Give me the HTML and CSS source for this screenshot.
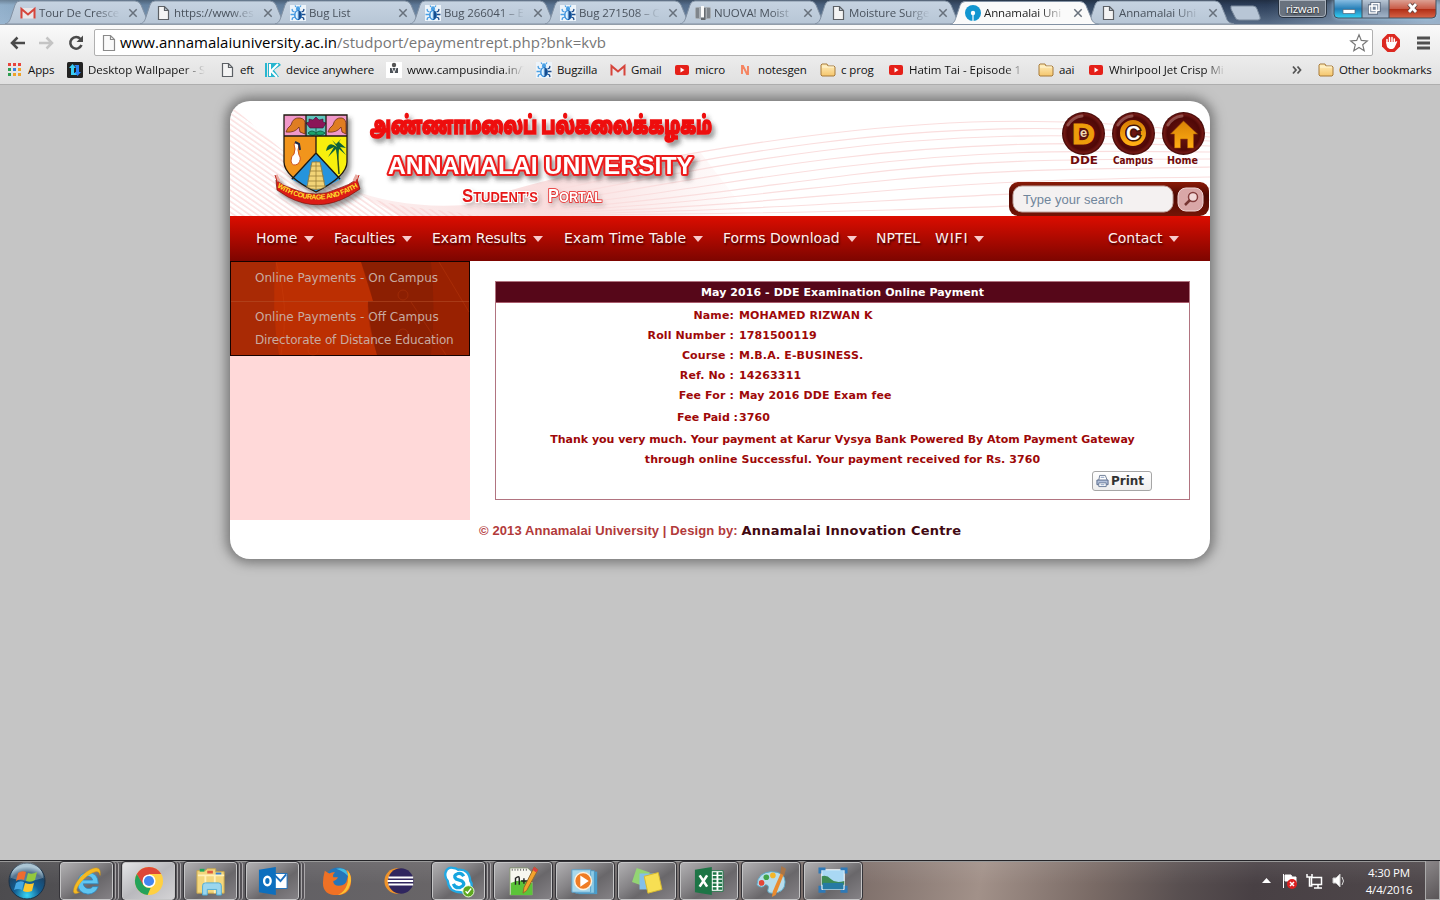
FILE: index.html
```html
<!DOCTYPE html>
<html lang="en">
<head>
<meta charset="utf-8">
<title>Annamalai University</title>
<link rel="stylesheet" href="styles.css">
</head>
<body>
<svg class="defs" width="0" height="0">
  <defs>
    <linearGradient id="tabg" x2="0" y2="1"><stop offset="0" stop-color="#c6d3e1"/><stop offset="1" stop-color="#b7c6d6"/></linearGradient>
    <linearGradient id="foldg" x2="0" y2="1"><stop offset="0" stop-color="#fff0c0"/><stop offset="1" stop-color="#f5c56b"/></linearGradient>
    <symbol id="tab" viewBox="0 0 149 24"><path d="M0 24C4 23 5 20 6 17L10 5Q11 1 15 1H130Q134 1 136 5L141 17C142 21 144 23 149 24Z"/></symbol>
    <symbol id="x" viewBox="0 0 10 10"><path d="M1.300 1.300 8.700 8.700M8.700 1.300 1.300 8.700" stroke="currentColor" stroke-width="1.500"/></symbol>
    <symbol id="gmail" viewBox="0 0 16 16"><path d="M1 3h14v10.500H1z" fill="#e8e6e8"/><path d="M1.500 13.500V4L8 9.500 14.500 4v9.500" fill="none" stroke="#d6453b" stroke-width="2"/></symbol>
    <symbol id="page" viewBox="0 0 16 16"><path d="M3.500 1.500h6l4 4v9h-10zM9.500 1.500v4h4" fill="#f4f4f4" stroke="#5c6065" stroke-width="1.200"/></symbol>
    <symbol id="bug" viewBox="0 0 16 16"><path fill="#edf4fa" d="M0 0h16v16H0z"/><path d="M6 2 5 .5M10 2l1-1.500M4.500 7 2.500 6 2 4M4.500 9.500H.5M5 12l-2.500 1-.5 2" stroke="#4ba0e4" fill="none" stroke-width="1.300"/><path d="M11.500 7l2-1 .5-2M11.500 9.500h4M11 12l2.500 1 .5 2" stroke="#1c4c8c" fill="none" stroke-width="1.300"/><path d="M5.500 5h5L8 3z" fill="#4ba0e4"/><circle cx="8" cy="3.200" r="2" fill="#4ba0e4"/><ellipse cx="8" cy="10" rx="3.200" ry="4.500" fill="#e3f3ff" stroke="#3b91dc" stroke-width="1.500"/><path d="M8 5.500c5 .5 4.500 8.500 0 9.500z" fill="#174d8f"/><path d="M8 6v8" stroke="#9ed2f8"/></symbol>
    <symbol id="yt" viewBox="0 0 16 16"><rect x="1" y="3" width="14" height="10" rx="2" fill="#e52019"/><path d="m6.500 5.500 4 2.500-4 2.500z" fill="#fff"/></symbol>
    <symbol id="folder" viewBox="0 0 16 16"><path d="M1 13V3l1-1h5l1 2h6l1 1v8l-1 1H2z" fill="url(#foldg)" stroke="#a77a3b"/><path d="M2 5h12" stroke="#fff6d5"/></symbol>
  </defs>
</svg>

<header class="chrome">
  <div class="strip">
    <div class="tab"><svg class="shape"><use href="#tab"/></svg><svg class="ico"><use href="#gmail"/></svg><span>Tour De Cresce</span><svg class="close"><use href="#x"/></svg></div>
    <div class="tab"><svg class="shape"><use href="#tab"/></svg><svg class="ico"><use href="#page"/></svg><span>https://www.es</span><svg class="close"><use href="#x"/></svg></div>
    <div class="tab"><svg class="shape"><use href="#tab"/></svg><svg class="ico"><use href="#bug"/></svg><span>Bug List</span><svg class="close"><use href="#x"/></svg></div>
    <div class="tab"><svg class="shape"><use href="#tab"/></svg><svg class="ico"><use href="#bug"/></svg><span>Bug 266041 – E</span><svg class="close"><use href="#x"/></svg></div>
    <div class="tab"><svg class="shape"><use href="#tab"/></svg><svg class="ico"><use href="#bug"/></svg><span>Bug 271508 – C</span><svg class="close"><use href="#x"/></svg></div>
    <div class="tab"><svg class="shape"><use href="#tab"/></svg><svg class="ico" viewBox="0 0 16 16"><rect y="2" width="16" height="12" rx="2" fill="#a7adb3"/><path fill="#7f858b" d="M1 3h3v10H1zM12 3h3v10h-3z"/><path fill="#fafafa" d="M6 1h3v11H6z"/><path fill="#666b70" d="M9 3h1.500v12H6v-2h3z"/></svg><span>NUOVA! Moist</span><svg class="close"><use href="#x"/></svg></div>
    <div class="tab"><svg class="shape"><use href="#tab"/></svg><svg class="ico"><use href="#page"/></svg><span>Moisture Surge</span><svg class="close"><use href="#x"/></svg></div>
    <div class="tab active"><svg class="shape"><use href="#tab"/></svg><svg class="ico" viewBox="0 0 16 16"><circle cx="8" cy="8" r="8" fill="#1296d0"/><circle cx="8" cy="8" r="2.200" fill="#fff"/><path d="M8 8v8" stroke="#fff" stroke-width="1.200"/></svg><span>Annamalai Uni</span><svg class="close"><use href="#x"/></svg></div>
    <div class="tab"><svg class="shape"><use href="#tab"/></svg><svg class="ico"><use href="#page"/></svg><span>Annamalai Uni</span><svg class="close"><use href="#x"/></svg></div>
    <svg class="newtab" viewBox="0 0 32 16"><path d="M1 1h22q3 0 4 3l3 8q1 3-2 3H9q-3 0-4-3L1 4Z" fill="#b8c6d6" stroke="#7c8b9d"/></svg>
    <div class="user">rizwan</div>
    <svg class="winbtns" viewBox="0 0 104 20">
      <defs><linearGradient id="wr" x2="0" y2="1"><stop offset="0" stop-color="#dca093"/><stop offset=".48" stop-color="#c95b47"/><stop offset=".5" stop-color="#b02c14"/><stop offset="1" stop-color="#d76548"/></linearGradient><linearGradient id="wb" x2="0" y2="1"><stop offset="0" stop-color="#88bde2"/><stop offset=".5" stop-color="#247eb7"/><stop offset="1" stop-color="#33d4f5"/></linearGradient><linearGradient id="wg" x2="0" y2="1"><stop offset="0" stop-color="#b8c6d5"/><stop offset=".5" stop-color="#8192a7"/><stop offset="1" stop-color="#a3b6cb"/></linearGradient></defs>
      <path d="M1 0h28v18H5q-4 0-4-4z" fill="url(#wb)"/><path d="M29 0h27v18H29z" fill="url(#wg)"/><path d="M56 0h47v14q0 4-4 4H56z" fill="url(#wr)"/><path d="M1 0v14q0 4 4 4h94q4 0 4-4V0M29 0v18M56 0v18" fill="none" stroke="#43505f"/>
      <path d="M10 9.500h12v4H10z" fill="#fff" stroke="#4d657b" stroke-width=".7"/><path d="M39 3.500h7v7h-7zM36.500 6h7v7h-7z" fill="#91a1b5" stroke="#43536a" stroke-width="3"/><path d="M39 3.500h7v7h-7zM36.500 6h7v7h-7z" fill="#71839a" stroke="#fff" stroke-width="1.600"/><path d="m76 4 7 8m0-8-7 8" stroke="#62423d" stroke-width="4.500"/><path d="m76 4 7 8m0-8-7 8" stroke="#fff" stroke-width="2.800"/>
    </svg>
  </div>
  <div class="toolbar">
    <svg class="navico" viewBox="0 0 86 20"><path d="M17 10H4M9.500 4.500 4 10l5.500 5.500" fill="none" stroke="#4a4a4a" stroke-width="2.500"/><path d="M31 10h13M38.500 4.500 44 10l-5.500 5.500" fill="none" stroke="#c4c4c4" stroke-width="2.500"/><path d="M72.500 6A5.800 5.800 0 1 0 73.500 12" fill="none" stroke="#4a4a4a" stroke-width="2.500"/><path d="M75 2.500V9h-6.500z" fill="#4a4a4a"/></svg>
    <div class="omni"><svg class="pageico" viewBox="0 0 14 18"><path d="M1.500 1.500h7l4 4v11h-11zM8.500 1.500v4h4" fill="#fafafa" stroke="#8a8a8a" stroke-width="1.200"/></svg><div class="url"><b>www.annamalaiuniversity.ac.in</b>/studport/epaymentrept.php?bnk=kvb</div><svg class="star" viewBox="0 0 20 20"><path d="m10 1.800 2.300 5.600 6 .5-4.600 3.900 1.500 5.900L10 14.500l-5.200 3.200 1.500-5.900-4.600-3.900 6-.5z" fill="#fff" stroke="#777" stroke-width="1.200"/></svg></div>
    <svg class="abp" viewBox="0 0 18 18"><path d="M5.500 0h7L18 5.500v7L12.500 18h-7L0 12.500v-7z" fill="#dc2820"/><path d="M5 9V5.500M7.500 9V3.500M10 9V3.500M12.300 9V5" stroke="#fff" stroke-width="1.500" stroke-linecap="round"/><path d="M4.300 8h8.700l2-1c.8.300-.4 2-2 5.500-1 2-2 2.500-4 2.500-3 0-4.700-2-4.700-7z" fill="#fff"/></svg>
    <svg class="menuico" viewBox="0 0 14 14"><path d="M0 2h13M0 7h13M0 12h13" stroke="#505050" stroke-width="3"/></svg>
  </div>
  <div class="marks">
    <div><svg class="ico" viewBox="0 0 16 16"><path d="M1 1h3v3H1zM6 1h3v3H6zM11 1h3v3h-3z" fill="#e8453c"/><path d="M1 6h3v3H1zM1 11h3v3H1z" fill="#2e9e50"/><path d="M6 6h3v3H6z" fill="#3a80e0"/><path d="M11 6h3v3h-3zM6 11h3v3H6zM11 11h3v3h-3z" fill="#efa32a"/></svg><span>Apps</span></div>
    <div><svg class="ico" viewBox="0 0 16 16"><rect width="16" height="16" rx="1.500" fill="#222"/><path d="M5.500 2 9 6H7v5h3v2H4V6H2z" fill="#38cdf5"/><path d="m10.500 14 3.500-4h-2V3H7l2 2v5H7.500z" fill="#2b83f4"/></svg><span class="fade w117">Desktop Wallpaper - S</span></div>
    <div><svg class="ico"><use href="#page"/></svg><span>eft</span></div>
    <div><svg class="ico" viewBox="0 0 16 16"><path fill="#27b6cf" d="M0 1h2v14H0zM3 1h11l2 2-7 5 5 7H3z"/><path d="M5 2v12M13 2 6 9l6 6" stroke="#fff" stroke-width="2" fill="none"/></svg><span>device anywhere</span></div>
    <div><svg class="ico" viewBox="0 0 16 16"><path fill="#fff" d="M0 0h16v16H0z"/><circle cx="8" cy="3" r="2.200" fill="#555"/><path d="M4 6h8v5H4z" fill="#4b5158"/><path d="m6 6 2 5 2-5M8 11v-2" stroke="#eee" fill="none"/></svg><span class="fade w117">www.campusindia.in/?</span></div>
    <div><svg class="ico"><use href="#bug"/></svg><span>Bugzilla</span></div>
    <div><svg class="ico"><use href="#gmail"/></svg><span>Gmail</span></div>
    <div><svg class="ico"><use href="#yt"/></svg><span>micro</span></div>
    <div><svg class="ico" viewBox="0 0 16 16"><path d="M5 12V4h1l4 8h1V4" fill="none" stroke="#f58461" stroke-width="1.900"/></svg><span>notesgen</span></div>
    <div><svg class="ico"><use href="#folder"/></svg><span>c prog</span></div>
    <div><svg class="ico"><use href="#yt"/></svg><span class="fade w117">Hatim Tai - Episode 1</span></div>
    <div><svg class="ico"><use href="#folder"/></svg><span>aai</span></div>
    <div><svg class="ico"><use href="#yt"/></svg><span class="fade w117">Whirlpool Jet Crisp Mi</span></div>
    <div><svg class="more" viewBox="0 0 12 10"><path d="m2 1.500 3 3.500L2 8.500M6.500 1.500 9.500 5 6.500 8.500" fill="none" stroke="#555" stroke-width="1.800"/></svg></div>
    <div><svg class="ico"><use href="#folder"/></svg><span>Other bookmarks</span></div>
  </div>
</header>

<main class="view">
  <section class="card">
    <svg class="banner" viewBox="0 0 980 115">
      <defs>
        <pattern id="hatch" width="40" height="4.500" patternUnits="userSpaceOnUse" patternTransform="rotate(35)"><path d="M0 1h40" stroke="#fbe1e1" stroke-width="1.400"/></pattern>
        <radialGradient id="orb" cx=".5" cy=".5" r=".5"><stop offset="0" stop-color="#6e1711"/><stop offset=".75" stop-color="#500807"/><stop offset=".9" stop-color="#701814"/><stop offset="1" stop-color="#3c0605"/></radialGradient>
        <linearGradient id="gold" x2="0" y2="1"><stop offset="0" stop-color="#d98206"/><stop offset="1" stop-color="#ffae13"/></linearGradient>
        <linearGradient id="wash"><stop offset="0" stop-color="#f7cfcf" stop-opacity=".3"/><stop offset=".5" stop-color="#f7cfcf" stop-opacity=".7"/><stop offset="1" stop-color="#f7cfcf" stop-opacity="0"/></linearGradient>
        <linearGradient id="sbar" x2="0" y2="1"><stop offset="0" stop-color="#8b1b08"/><stop offset=".4" stop-color="#4d0902"/><stop offset="1" stop-color="#751506"/></linearGradient>
        <filter id="sh" x="-20%" y="-40%" width="140%" height="200%"><feDropShadow dx="3" dy="4" stdDeviation="2" flood-color="#333" flood-opacity=".5"/></filter>
        <filter id="soft" x="-20%" y="-40%" width="140%" height="200%"><feDropShadow dx="2" dy="3" stdDeviation="2" flood-color="#333" flood-opacity=".25"/></filter>
      </defs>
      <path d="M0 4C45 40 85 93 180 106Q220 110 250 115H0Z" fill="url(#hatch)"/>
      <path d="M120 88Q170 108 235 104Q330 70 470 51L520 115H170Z" fill="url(#wash)"/>
      <g fill="none" stroke="#fadede" stroke-width="1.200">
        <path d="M250 101C350 74 440 53 570 36S820 13 980 32"/><path d="M260 103C370 80 450 60 580 43S830 22 980 36"/><path d="M270 105C390 85 460 67 590 50S830 31 980 40"/><path d="M280 107C410 90 470 74 600 58S830 40 980 45"/><path d="M290 108C430 95 480 82 610 66S830 49 980 51"/><path d="M300 110C440 99 500 89 620 74S830 58 980 58"/><path d="M310 111C450 103 510 95 630 82S830 68 980 66"/><path d="M320 112C460 107 520 101 640 91S830 78 980 76"/><path d="M330 113C470 110 530 107 650 100S830 90 980 87"/><path d="M340 114C480 113 550 112 660 109S830 102 980 99"/>
      </g>
      <g filter="url(#sh)">
        <path d="M54 14h63v47q0 14-31 30Q54 76 54 61Z" fill="#f1951e"/>
        <path d="M86 35h31v26q0 14-31 30z" fill="#f8ef10"/><path d="M86 52 61 78l25 13 25-13z" fill="#2694dc"/>
        <path d="M54 14h63v21H54z" fill="#f198c9"/><path d="M76 14h20v21H76z" fill="#60c5bd"/>
        <g stroke="#6d3115" stroke-width=".8" fill="#df7d24"><path d="M56 31q1-4 5-7 2-8 9-7 6 1 5 7v9l-5-2-1-5q-4 6-13 5z"/><path d="M98 31q1-4 5-7 2-8 9-7 4 1 4 7v9l-4-2-1-5q-4 6-13 5z"/></g>
        <path d="m86 16-3 3-4-1v3l-3 1 4 5h13l3-5-3-1v-3l-4 1z" fill="#8b1858" stroke="#3d1237" stroke-width=".6"/><path d="M78 32q4-4 8 0 4-4 9 0-4 4-9 1-4 3-8-1M86 27v7" stroke="#156748" fill="#1ca36c"/>
        <path d="M54 35h63M76 14v21M96 14v21M86 35v18M54 14v47q0 14 32 30Q117 75 117 61V14ZM86 52 62 78M86 52l24 26" fill="none" stroke="#211910" stroke-width="1.300"/>
        <path d="M82 61h8l5 25q-9 5-18 0z" fill="#f2d477" stroke="#87703a" stroke-width=".7"/><path d="M80 65h12M79 70h14M78 75h16M77 80h18M76 85h20M86 60v29" stroke="#9d8138" stroke-width=".8"/>
        <path d="M64 43q3-3 5 1-2 5 0 10 3 4-1 9-6 3-7-3 0-5 3-7 2-5 0-10z" fill="#fff" stroke="#d0541d"/><path d="m65 41 4 2 1 6" stroke="#1b294b" fill="none" stroke-width="2"/>
        <path d="M109 73 107 46" stroke="#365118" stroke-width="1.500"/><path d="M107 46q-9-7-11 4l8-4-6 10 8-8 2 11 1-11 7 6-6-8 6 1-7-6 2-3-5 5-4-4z" fill="#0a623a"/>
        <path d="M46 79q7 6 17 9 23 10 44 0 13-4 20-10l3 10-11 7q-31 17-61 1l-11-7z" fill="#db1d14" stroke="#77110a" stroke-width=".7"/><path d="m46 74 3 6M127 74l-3 6" stroke="#e9a9a0" stroke-width="3"/><path d="m45 74 2 6M129 74l-2 6" stroke="#c22b20" stroke-width="1"/>
      </g>
      <path id="motto" d="M47 86Q86 111 128 86" fill="none"/><text class="motto"><textPath href="#motto" textLength="86">WITH COURAGE AND FAITH</textPath></text>
      <g filter="url(#sh)"><text class="tamil" x="140" y="33" textLength="342" lengthAdjust="spacingAndGlyphs">அண்ணாமலைப் பல்கலைக்கழகம்</text></g>
      <g filter="url(#sh)"><text class="uni" x="158" y="73" textLength="305" lengthAdjust="spacingAndGlyphs">ANNAMALAI UNIVERSITY</text></g>
      <g filter="url(#soft)"><text class="student" x="232" y="101" textLength="76" lengthAdjust="spacingAndGlyphs">S<tspan class="sm">TUDENT’S</tspan></text><text class="portal" x="318" y="101" textLength="54" lengthAdjust="spacingAndGlyphs">P<tspan class="sm">ORTAL</tspan></text></g>
      <g class="orbs">
        <circle cx="853.500" cy="32.500" r="21.500" fill="url(#orb)"/><circle cx="903.500" cy="32.500" r="21.500" fill="url(#orb)"/><circle cx="953.500" cy="32.500" r="21.500" fill="url(#orb)"/>
        <g fill="none" stroke="#c99a93" stroke-width="3" opacity=".45" stroke-linecap="round"><path d="M838 24q5-8 14-9M888 24q5-8 14-9M938 24q5-8 14-9"/></g>
        <text class="bigd" x="842" y="43" textLength="23" lengthAdjust="spacingAndGlyphs">D</text><text class="ebig" x="850" y="36">e</text>
        <circle cx="903" cy="32" r="10.500" fill="none" stroke="url(#gold)" stroke-width="5"/><text class="bigc" x="896" y="39">C</text>
        <path d="m953.500 20-13 13h4v14h6v-9h7v9h6V33h4z" fill="url(#gold)" stroke="#a65309" stroke-width=".6"/>
        <g class="caption"><text x="840" y="63" textLength="28" lengthAdjust="spacingAndGlyphs">DDE</text><text x="883" y="63" textLength="40" lengthAdjust="spacingAndGlyphs">Campus</text><text x="937" y="63" textLength="31" lengthAdjust="spacingAndGlyphs">Home</text></g>
      </g>
      <rect x="779" y="81" width="200" height="34" rx="9" fill="url(#sbar)"/><rect x="783" y="85" width="160" height="26" rx="9" fill="#f4f1f1" stroke="#c1a59f"/>
      <text class="search" x="793" y="103" textLength="100">Type your search</text>
      <rect x="948" y="87" width="25" height="23" rx="8" fill="#d9a7a7" stroke="#eed4d4"/><circle cx="963" cy="96" r="4.500" fill="#f1d8d8" stroke="#853e3d" stroke-width="1.500"/><path d="m960 99-5 5" stroke="#753431" stroke-width="2.500"/>
    </svg>
    <nav class="menu"><a>Home<i></i></a><a>Faculties<i></i></a><a>Exam Results<i></i></a><a class="wide">Exam Time Table<i></i></a><a>Forms Download<i></i></a><a>NPTEL</a><a class="wifi">WIFI<i></i></a><a>Contact<i></i></a></nav>
    <div class="body">
      <aside class="side"><div class="links"><svg class="tex" viewBox="0 0 238 93" preserveAspectRatio="none"><path d="M45 0h85q8 18 12 39h-5q-2 20 9 54H48q-8-45-3-93z" fill="#c93400" opacity=".6"/><path d="M130 0h108v93H146q-9-34-9-54h5z" fill="#741500" opacity=".55"/><path d="M200 0q5 45 0 93h38V0z" fill="#b92800" opacity=".3"/><g fill="none" stroke="#d24a16" opacity=".25"><circle cx="172" cy="33" r="5"/><circle cx="172" cy="72" r="5"/><circle cx="82" cy="88" r="5"/><path d="m180 40 35 53M208 0l30 50M45 0q14 40 5 93"/></g><path d="M0 39.500h238" stroke="#b8542d" opacity=".5"/></svg><a>Online Payments - On Campus</a><a>Online Payments - Off Campus<br><span class="dde">Directorate of Distance Education</span></a></div></aside>
      <article class="main">
        <div class="panel">
          <h1>May 2016 - DDE Examination Online Payment</h1>
          <dl><dt>Name:</dt><dd>MOHAMED RIZWAN K</dd><dt>Roll Number :</dt><dd>1781500119</dd><dt>Course :</dt><dd>M.B.A. E-BUSINESS.</dd><dt>Ref. No :</dt><dd>14263311</dd><dt>Fee For :</dt><dd>May 2016 DDE Exam fee</dd><dt class="paid">Fee Paid :</dt><dd class="paid">3760</dd></dl>
          <p>Thank you very much. Your payment at Karur Vysya Bank Powered By Atom Payment Gateway<br><span>through online Successful. Your payment received for Rs. 3760</span></p>
          <button class="print"><svg viewBox="0 0 14 14"><path d="M3 6 4 1h6l2 5" fill="#fff" stroke="#6d7c94"/><path d="M1 6h12v5H1z" fill="#b4c2dc" stroke="#526486"/><path d="M3 9h8v4H3z" fill="#fff" stroke="#667896"/><path d="M5 3h4M5 11h4" stroke="#8298bd"/></svg>Print</button>
        </div>
        <footer>© 2013 Annamalai University | Design by: <b>Annamalai Innovation Centre</b></footer>
      </article>
    </div>
  </section>
</main>

<footer class="taskbar">
  <svg class="start" viewBox="0 0 40 40"><defs><radialGradient id="st" cx=".5" cy=".9" r=".8"><stop offset="0" stop-color="#38d7f5"/><stop offset=".45" stop-color="#125e93"/><stop offset=".8" stop-color="#1c4568"/><stop offset="1" stop-color="#8fb2c6"/></radialGradient></defs><circle cx="20" cy="20" r="18" fill="url(#st)" stroke="#1b3146"/><path d="M4 17a16 16 0 0 1 32 0q-16 6-32 0z" fill="#fff" opacity=".25"/><path d="M11 12q4-3 8-1l-2 8q-4-2-8 1z" fill="#ee6b2f"/><path d="M21 12q4 2 9-1l-2 8q-4 3-9 1z" fill="#93c83e"/><path d="M9 22q4-3 8-1l-2 8q-4-2-8 0z" fill="#45a8e4"/><path d="M18 22q5 2 9 0l-2 8q-5 2-9 0z" fill="#fdc72c"/></svg>
  <div class="apps">
    <div class="btn stack"><svg viewBox="0 0 32 32"><path d="M28 19H12q1 5 6 5 3 0 4-2h6q-3 8-11 8Q6 29 6 18 7 7 17 7q11 0 11 12zM12 15h10q-1-4-5-4t-5 4z" fill="#5fc5f1" stroke="#2b84bf" stroke-width=".8"/><path d="M8 28Q0 32 2 24C5 13 18 2 26 2q5 0 4 8-1-5-5-4C17 8 7 18 5 25q0 3 3 3z" fill="#f6ba23" stroke="#d99a10" stroke-width=".5"/></svg></div>
    <div class="btn on stack"><svg viewBox="0 0 32 32"><circle cx="16" cy="16" r="15" fill="#ffd042"/><path d="M16 16 9 20 3 8.500A15 15 0 0 1 29 8.500H16z" fill="#de4738"/><path d="M3 8.500 9.700 20q3 4 8 3.500L14.500 31A15 15 0 0 1 3 8.500z" fill="#24a25a"/><circle cx="16" cy="16" r="7" fill="#fff"/><circle cx="16" cy="16" r="5.400" fill="#4386ef"/></svg></div>
    <div class="btn stack"><svg viewBox="0 0 32 32"><path d="M1 5h9l2-2h9v3h9v23H1z" fill="#f4d77d" stroke="#c9a64c"/><path d="M4 3h5v3H4z" fill="#20a65c"/><path d="M12 5h6v3h-6z" fill="#de5a41"/><path d="M21 7h6v3h-6z" fill="#3680d3"/><path d="M2 10h28M10 10v19M20 11v18" stroke="#fff0b8" stroke-width="2"/><path d="M7 31V21q0-3 3-3h14q3 0 3 3v10h-5v-6H12v6z" fill="#9bd6ee" stroke="#4eabd8"/></svg></div>
    <div class="btn stack"><svg viewBox="0 0 32 32"><path d="M17 8h14v16H17z" fill="#fff" stroke="#1b70bd"/><path d="m18 10 6 6 6-7" fill="none" stroke="#1a6fc0" stroke-width="2"/><path d="M1 4 19 1v30L1 28z" fill="#0d6fbe"/><ellipse cx="10" cy="16" rx="3.500" ry="4.500" fill="none" stroke="#fff" stroke-width="2.500"/></svg></div>
    <div class="btn flat"><svg viewBox="0 0 32 32"><circle cx="17" cy="15" r="13.500" fill="#2575b9"/><path d="M15 3q13-3 15 11-5-8-15-11" fill="#42bbe2"/><path d="M3 5q3 2 5 3 4-2 6-1-3 2-2 5h5q-1 3-5 4 0 5 6 5 8 0 9-8 2-5-2-9 7 3 6 13-1 14-15 14Q1 31 1 18 1 12 3 5z" fill="#ef7125"/><path d="M27 4q6 8 3 16-3 10-13 11 14-7 10-27z" fill="#fbc234"/></svg></div>
    <div class="btn flat"><svg viewBox="0 0 34 32"><circle cx="15" cy="16" r="14.500" fill="#f19429"/><circle cx="19" cy="16" r="14.500" fill="#30265f"/><path d="M5 12h28M4 16h29M5 20h28" stroke="#fff" stroke-width="2.200"/></svg></div>
    <div class="btn stack"><svg viewBox="0 0 32 32"><path d="M9 2q4 0 6 2 12-1 13 12 3 4 0 9-4 5-10 3Q5 28 4 16-1 10 3 4q3-3 6-2z" fill="#fff" stroke="#22a9e3" stroke-width="2.500"/><path d="M21 11q-2-4-6-3-6 2-2 6l6 2q5 4-2 7-5 1-7-4" fill="none" stroke="#16a5df" stroke-width="3.500"/><circle cx="26" cy="27" r="6" fill="#5ea820" stroke="#eaffda"/><path d="m23 27 2 2 4-5" fill="none" stroke="#fff" stroke-width="1.500"/></svg></div>
    <div class="btn"><svg viewBox="0 0 32 32"><path d="M2 2h19l5 5v24H2z" fill="#f7f7ef" stroke="#839271"/><path d="M3 18q12-5 23 0v13H3z" fill="#5cc439"/><path d="M4 4h16" stroke="#666" stroke-dasharray="1 2" stroke-width="2"/><path d="M8 20v-7q4-3 4 0v7M14 16h6M17 13v6M20 16h6M23 13v6" stroke="#222" stroke-width="1.500" fill="none"/><path d="m28 1 4 3-12 22-4 3 1-6z" fill="#f3a32b" stroke="#92672b"/><path d="m28 1 4 3-2 3-4-3z" fill="#d94343"/></svg></div>
    <div class="btn"><svg viewBox="0 0 32 32"><path d="M9 6h20v24H9z" fill="#489dcc"/><path d="M6 5h20v24H6z" fill="#8bcbe8" stroke="#5195bd"/><path d="M2 4h20v24H2z" fill="#a9d8ec" stroke="#5aa0ca"/><circle cx="14" cy="16" r="9" fill="#ef7c24" stroke="#fff1dc" stroke-width="1.500"/><path d="m11 10 9 6-9 6z" fill="#fff"/></svg></div>
    <div class="btn"><svg viewBox="0 0 32 32"><path d="m5 2 14 5-5 15-14-5z" fill="#93d473"/><path d="M8 8h16v17H8z" fill="#83bfe8"/><path d="m13 11 15-4 4 18-15 4z" fill="#f7df53" stroke="#d5b82f"/></svg></div>
    <div class="btn"><svg viewBox="0 0 32 32"><path d="M15 5h16v22H15z" fill="#fff" stroke="#1d7546"/><path d="M20 8h4M26 8h4M20 12h4M26 12h4M20 16h4M26 16h4M20 20h4M26 20h4M20 24h4M26 24h4" stroke="#1d7546" stroke-width="2.500"/><path d="M1 4 19 1v30L1 28z" fill="#1d7546"/><path d="m6 10 8 12m0-12L6 22" stroke="#fff" stroke-width="2.800"/></svg></div>
    <div class="btn"><svg viewBox="0 0 32 32"><path d="M1 20Q2 7 16 6q15 0 15 11 0 12-14 12-6 0-4-5 1-4-3-4-4 5-9 0z" fill="#b8ddec" stroke="#5caac8"/><circle cx="6" cy="18" r="3" fill="#e34537"/><circle cx="11" cy="12" r="3" fill="#42a54b"/><circle cx="18" cy="10" r="3" fill="#f4b629"/><path d="m27 6 3 2-9 23-4 2 1-6z" fill="#e98b2f"/><path d="m26 8 1-8 5 3-2 7z" fill="#a97647"/></svg></div>
    <div class="btn"><svg viewBox="0 0 32 32"><path d="M4 4h24v21H4z" fill="#a9d8f4" stroke="#fff"/><path d="M4 11q5-2 10 3t14 2v4H4z" fill="#3d8b55"/><path d="M5 18h22v7H5z" fill="#267aa3"/><path d="M2 8V3h6M24 3h6v5M30 21v6h-6M8 27H2v-6" fill="none" stroke="#2e79b7" stroke-width="3"/></svg></div>
  </div>
  <div class="tray">
    <svg viewBox="0 0 84 20"><path d="m1 12 4.500-5 4.500 5z" fill="#fff"/><path d="M22.500 3v14M24 4h6l1 2h4v6h-5l-1-2h-5z" stroke="#fff" fill="#fff"/><circle cx="31" cy="13" r="5" fill="#db2020"/><path d="m29 11 4 4m0-4-4 4" stroke="#fff" stroke-width="1.500"/><path d="M50.500 6.500h10v7h-10zM53 17h8M57 14v3M46 3v3h5V3M48.500 6v9h3" fill="none" stroke="#fff" stroke-width="1.500"/><path d="M72 7h3l4-4v13l-4-4h-3z" fill="#fff" stroke="#ccc"/><path d="M81 6q3 4 0 8" fill="none" stroke="#ddd"/></svg>
    <div class="clock">4:30 PM<br>4/4/2016</div>
  </div>
  <div class="peek"></div>
</footer>
</body>
</html>
```
FILE: styles.css
```css
* { box-sizing: border-box; }
body { margin: 0; width: 1440px; height: 900px; overflow: hidden; display: flex; flex-direction: column; font-family: "Open Sans", sans-serif; font-size: 11.5px; color: #111; background: #c5c5c5; }
svg { display: block; flex: none; overflow: visible; }
.defs { position: absolute; }
.ico { width: 16px; height: 16px; }
.chrome { height: 85px; display: flex; flex-direction: column; background: linear-gradient(#fafafa 24px, #e0e0e0 84px); border-bottom: 1px solid #aeaeae; }
.strip { height: 25px; padding-left: 5px; display: flex; background: linear-gradient(rgba(0,0,0,.25), transparent 5px, rgba(170,195,220,.35)), linear-gradient(90deg, #91afca, #6784a2 8%, #536b89 50%, #32455f 73%, #2b3d58 88%, #92a9c1 99%); border-bottom: 1px solid #929da9; }
.tab { position: relative; width: 135px; height: 24px; display: flex; align-items: center; padding: 2px 0 0 15px; color: #49525d; letter-spacing: -.1px; }
.tab .shape { position: absolute; left: 0; top: 0; width: 149px; height: 24px; fill: url(#tabg); stroke: #8291a3; }
.tab .ico, .tab span, .tab .close { position: relative; }
.tab span { width: 81px; margin-left: 3px; padding-bottom: 1px; white-space: nowrap; overflow: hidden; mask-image: linear-gradient(90deg, #000 70%, transparent); }
.tab .close { width: 10px; height: 10px; margin-left: 8px; color: #68717c; }
.tab.active { z-index: 2; color: #222; }
.tab.active .shape { fill: #fafafa; height: 25px; }
.newtab { width: 32px; height: 16px; margin: 5px 0 0 10px; }
.user { width: 49px; height: 18px; margin-left: 16px; border: 1px solid #26313f; border-top: 0; border-radius: 0 0 5px 5px; box-shadow: inset 0 0 0 1px #a8b0bb; background: #69727e; color: #fff; text-align: center; line-height: 17px; letter-spacing: -.3px; text-shadow: 0 1px 2px #000; }
.winbtns { width: 104px; height: 20px; margin-left: 6px; filter: drop-shadow(0 0 2px #9cc8e4); }
.toolbar { height: 34px; display: flex; align-items: center; padding: 1px 9px 0 8px; }
.navico { width: 86px; height: 20px; }
.omni { width: 1279px; height: 27px; display: flex; align-items: center; padding: 0 3px 0 7px; background: #fff; border: 1px solid #b0b0b0; border-radius: 2px; }
.pageico { width: 14px; height: 18px; }
.url { flex: 1; margin: -1px 0 0 4px; font-size: 15px; letter-spacing: .02px; color: #777; white-space: nowrap; }
.url b { font-weight: 400; color: #000; }
.star { width: 20px; height: 20px; }
.abp { width: 18px; height: 18px; margin-left: 9px; }
.menuico { width: 14px; height: 14px; margin-left: 17px; }
.marks { height: 25px; padding: 0 0 3px 7px; display: grid; grid-template-columns: 60px 152px 46px 121px 150px 74px 64px 63px 83px 68px 150px 50px 203px 27px 1fr; align-items: center; }
.marks div { display: flex; align-items: center; }
.marks span { margin: -1px 0 0 5px; white-space: nowrap; letter-spacing: -.12px; }
.marks .fade { overflow: hidden; letter-spacing: -.02px; mask-image: linear-gradient(90deg, #000 82%, transparent); }
.w117 { width: 117px; }
.more { width: 12px; height: 10px; }
.view { height: 775px; padding: 16px 230px 0; }
.card { width: 980px; height: 458px; border-radius: 20px; background: #fff; box-shadow: 0 0 12px 4px #777; }
.banner { width: 980px; height: 115px; overflow: hidden; border-radius: 20px 20px 0 0; }
.motto { font: bold 7px "Liberation Sans", sans-serif; fill: #ffe12d; }
.tamil { font: 900 24px "Noto Sans Tamil", "Lohit Tamil", "Noto Sans", sans-serif; fill: #ee1111; stroke: #ee1111; stroke-width: 1.5px; paint-order: stroke; }
.uni { font: 900 24px "Liberation Sans", sans-serif; fill: #fff; stroke: #ec1c1c; stroke-width: 4px; stroke-linejoin: round; paint-order: stroke; }
.student, .portal { font: bold 18px "Liberation Sans", sans-serif; fill: #e61919; stroke: #fff; stroke-width: 2px; paint-order: stroke; }
.portal { font-weight: bold; fill: #fff; stroke: #e61919; stroke-width: 1.6px; }
.sm { font-size: 14px; }
.bigd { font: 900 30px "Liberation Sans", sans-serif; fill: #ee9c0a; stroke: #ee9c0a; stroke-width: 1px; }
.ebig { font: bold 13px "Liberation Sans", sans-serif; fill: #eedbb3; stroke: #571010; stroke-width: 3px; paint-order: stroke; }
.bigc { font: bold 20px "Liberation Sans", sans-serif; fill: #fff; stroke: #3f1209; stroke-width: 3px; paint-order: stroke; }
.caption { font: bold 11px "DejaVu Sans", sans-serif; fill: #710b0b; }
.search { font: 13px "Liberation Sans", sans-serif; fill: #70859b; }
.menu { height: 45px; padding: 0 0 1px 26px; display: grid; grid-template-columns: 78px 98px 132px 159px 153px 59px 173px 1fr; align-items: center; background: linear-gradient(#dc0d00, #7d0500); font: 14px "DejaVu Sans", sans-serif; color: #fff0ed; text-shadow: 1px 2px 2px #410000; }
.menu a { display: flex; align-items: center; white-space: nowrap; }
.menu .wide { letter-spacing: .25px; }
.menu .wifi { letter-spacing: .8px; }
.menu i { margin-left: 7px; margin-top: 2px; border: 5px solid transparent; border-top: 6px solid #f8caca; border-bottom: 0; }
.menu .wifi i { margin-left: 6px; }
.body { display: flex; height: 298px; }
.side { width: 240px; height: 259px; background: #ffd9d9; }
.links { position: relative; height: 95px; border: 1px solid #160200; background: #a92a05; font: 12px/23px "DejaVu Sans", sans-serif; color: #c9aaa0; }
.tex { position: absolute; inset: 0; width: 238px; height: 93px; }
.links a { position: relative; display: block; height: 39px; padding: 5px 0 0 24px; white-space: nowrap; }
.dde { letter-spacing: -.13px; }
.main { width: 740px; padding: 20px 20px 0 25px; font: bold 11px/20px "DejaVu Sans", sans-serif; color: #9e0808; }
.panel { width: 695px; height: 219px; border: 1px solid #b17480; }
.panel h1 { margin: 0; height: 21px; line-height: 21px; background: #560719; border-bottom: 1px solid #a95c6c; color: #fff; font-size: 11px; letter-spacing: .07px; text-align: center; }
.panel dl { margin: 3px 0 0; display: grid; grid-template-columns: 238px 1fr; column-gap: 5px; letter-spacing: .12px; }
.panel dt { text-align: right; }
.panel dd { margin: 0; }
.panel .paid { height: 24px; line-height: 24px; }
.panel dt.paid { margin-right: -4px; letter-spacing: 0; }
.panel p { margin: 0; text-align: center; letter-spacing: -.02px; }
.panel p span { letter-spacing: .07px; }
.print { width: 60px; height: 20px; display: flex; align-items: center; gap: 2px; margin: 1px 0 0 596px; padding: 0 3px; border: 1px solid #a6a6a6; border-radius: 3px; background: linear-gradient(#fff, #eee); font: bold 12px "DejaVu Sans", sans-serif; color: #333; }
.print svg { width: 13px; height: 14px; }
.main footer { margin: 21px 0 0 -16px; white-space: nowrap; font: bold 13px/20px "Liberation Sans", sans-serif; letter-spacing: .1px; color: #b23a3a; }
.main footer b { font: bold 13px "DejaVu Sans", sans-serif; letter-spacing: .22px; color: #420912; }
.taskbar { height: 40px; display: flex; border-top: 1px solid #242428; box-shadow: inset 0 1px #999; background: linear-gradient(rgba(255,255,255,.08), transparent 60%), linear-gradient(100deg, #4c4b4e, #626064 20%, #716c6c 45%, #80716c 60%, #a29189 68%, #796a65 76%, #584f50 82%, #484044 87%, #4f484b); }
.start { width: 40px; height: 40px; margin: 0 20px 0 7px; }
.apps { display: grid; grid-template-columns: repeat(13, 62px); width: 820px; padding: 1px 0; margin-left: -7px; }
.btn { position: relative; width: 58px; height: 38px; display: grid; place-items: center; border: 1px solid #c5c5c6; outline: 1px solid #343338; border-radius: 3px; background: linear-gradient(145deg, #b1b0b2, #858386 40%, #69676a 60%, #858286); }
.btn svg { width: 30px; height: 30px; }
.btn.on { background: linear-gradient(145deg, #e4e5e7, #b9b9bd 50%, #d4d3d5); }
.btn.flat { border-color: transparent; outline: 0; background: none; }
.btn.stack { width: 53px; box-shadow: 2px 0 #5a585c, 3px 0 #aaa8aa, 5px 0 #555257, 6px 0 #aaa7aa; }
.tray { margin-left: auto; display: flex; align-items: center; gap: 14px; color: #fff; }
.tray svg { width: 84px; height: 20px; }
.clock { width: 60px; text-align: center; line-height: 17px; letter-spacing: -.15px; }
.peek { width: 15px; margin-left: 6px; border: 1px solid #aaa; border-top: 0; background: linear-gradient(145deg, #8c888a, #5a5557); }
```
